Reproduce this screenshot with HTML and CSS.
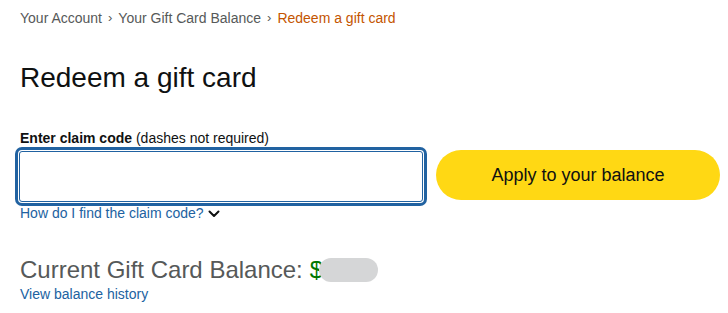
FILE: index.html
```html
<!DOCTYPE html>
<html>
<head>
<meta charset="utf-8">
<link rel="stylesheet" href="styles.css">
</head>
<body>
<div class="page">
  <nav class="crumbs">
    <a class="crumb" href="#">Your Account</a>
    <span class="sep">›</span>
    <a class="crumb" href="#">Your Gift Card Balance</a>
    <span class="sep">›</span>
    <span class="crumb current">Redeem a gift card</span>
  </nav>
  <h1 class="title">Redeem a gift card</h1>
  <label class="label" for="code"><b>Enter claim code</b> (dashes not required)</label>
  <div class="row">
    <div class="field">
      <input id="code" class="input" type="text">
      <a class="help" href="#">How do I find the claim code?
        <svg class="chev" width="12" height="8" viewBox="0 0 12 8"><path d="M1.5 1.5 L6 6 L10.5 1.5" fill="none" stroke="#0f1111" stroke-width="2" stroke-linecap="round" stroke-linejoin="round"/></svg>
      </a>
    </div>
    <button class="apply">Apply to your balance</button>
  </div>
  <div class="balance">Current Gift Card Balance: <span class="dollar">$</span><span class="mask"></span></div>
  <a class="history" href="#">View balance history</a>
</div>
</body>
</html>
```
FILE: styles.css
```css
html, body { margin: 0; padding: 0; background: #fff; }
body { font-family: "Liberation Sans", Arial, sans-serif; color: #0f1111; }
.page { padding: 9px 8px 0 20px; }
a { text-decoration: none; }
.crumbs { display: flex; align-items: center; gap: 6px; font-size: 14px; line-height: 18px; color: #565959; }
.crumb { color: #565959; }
.crumb.current { color: #c45500; }
.sep { font-size: 13px; color: #565959; }
.title { margin: 34px 0 0 0; font-size: 28px; font-weight: 400; line-height: 34px; color: #0f1111; }
.label { display: block; margin-top: 34px; font-size: 14px; line-height: 18px; color: #0f1111; }
.label b { font-weight: 700; }
.row { display: flex; align-items: flex-start; gap: 13px; margin-top: 3px; }
.field { display: flex; flex-direction: column; flex-shrink: 0; }
.input { box-sizing: border-box; width: 404px; height: 51px; margin: 1px 0 0 -1px; border: 1px solid #2162a1; border-radius: 3px; box-shadow: 0 0 0 1px #fff, 0 0 0 4px #2162a1; outline: none; background: #fff; }
.help { display: flex; align-items: center; gap: 4px; margin-top: 3px; font-size: 14px; line-height: 16px; color: #2162a1; }
.chev { margin-top: 1px; }
.apply { flex-shrink: 0; box-sizing: border-box; width: 284px; height: 50px; border: none; border-radius: 25px; background: #ffd814; color: #0f1111; font-family: inherit; font-size: 18px; padding: 0; }
.balance { margin-top: 34px; font-size: 24px; line-height: 30px; color: #565959; display: flex; align-items: center; }
.dollar { color: #007600; margin-left: 7px; }
.mask { display: inline-block; width: 59px; height: 24px; border-radius: 12px; background: #d5d6d7; margin-left: -4px; }
.history { display: block; margin-top: 1px; font-size: 14px; line-height: 16px; color: #2162a1; }
```
